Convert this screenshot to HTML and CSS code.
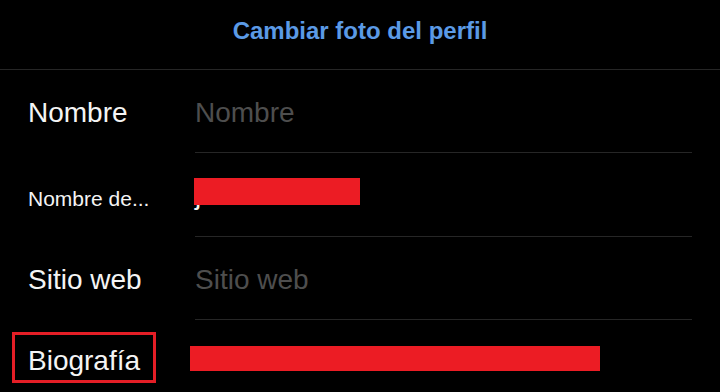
FILE: index.html
```html
<!DOCTYPE html>
<html lang="es">
<head>
    <meta charset="UTF-8">
    <meta name="viewport" content="width=device-width, initial-scale=1.0">
    <title>Editar perfil</title>
    <link rel="stylesheet" href="styles.css">
</head>
<body>
    <div class="screen">
        <div class="header">
            <a class="change-photo" href="#">Cambiar foto del perfil</a>
        </div>

        <div class="row">
            <div class="label">Nombre</div>
            <div class="value placeholder">Nombre</div>
        </div>

        <div class="row row-small">
            <div class="label">Nombre de...</div>
            <div class="value">j<span class="redact redact-user"></span></div>
        </div>

        <div class="row">
            <div class="label">Sitio web</div>
            <div class="value placeholder">Sitio web</div>
        </div>

        <div class="row row-bio">
            <div class="label"><span class="marked">Biografía</span></div>
            <div class="value no-line"><span class="redact redact-bio"></span></div>
        </div>
    </div>
</body>
</html>
```

FILE: styles.css
```css
html, body {
    margin: 0;
    height: 100%;
    overflow: hidden;
}

body {
    background-color: #000;
    color: #f4f4f4;
    font-family: 'Liberation Sans', Arial, sans-serif;
}

.header {
    height: 70px;
    box-sizing: border-box;
    padding-top: 17px;
    text-align: center;
    border-bottom: 1px solid #262626;
}

.change-photo {
    color: #5b9ae6;
    font-size: 24px;
    font-weight: bold;
    line-height: 28px;
    text-decoration: none;
}

.row {
    display: flex;
    height: 83px;
}

.label {
    width: 167px;
    padding-left: 28px;
    padding-top: 27px;
    font-size: 28px;
    line-height: 32px;
    white-space: nowrap;
}

.value {
    position: relative;
    flex: 1;
    margin-right: 28px;
    padding-top: 27px;
    font-size: 28px;
    line-height: 32px;
    border-bottom: 1px solid #262626;
}

.value.no-line {
    border-bottom: none;
}

.placeholder {
    color: #4e4e4e;
}

.row-small {
    height: 84px;
}

.row-small .label {
    padding-top: 34px;
    font-size: 21px;
    line-height: 24px;
}

.row-small .value {
    padding-top: 26px;
}

.row-bio .label {
    padding-top: 12px;
}

.marked {
    display: inline-block;
    margin-left: -16px;
    padding: 10px 13px 3px 13px;
    border: 3px solid #e41e26;
}

.redact {
    position: absolute;
    background-color: #ec1c24;
}

.redact-user {
    left: -1px;
    top: 25px;
    width: 166px;
    height: 27px;
}

.redact-bio {
    left: -5px;
    top: 26px;
    width: 410px;
    height: 25px;
}
```
